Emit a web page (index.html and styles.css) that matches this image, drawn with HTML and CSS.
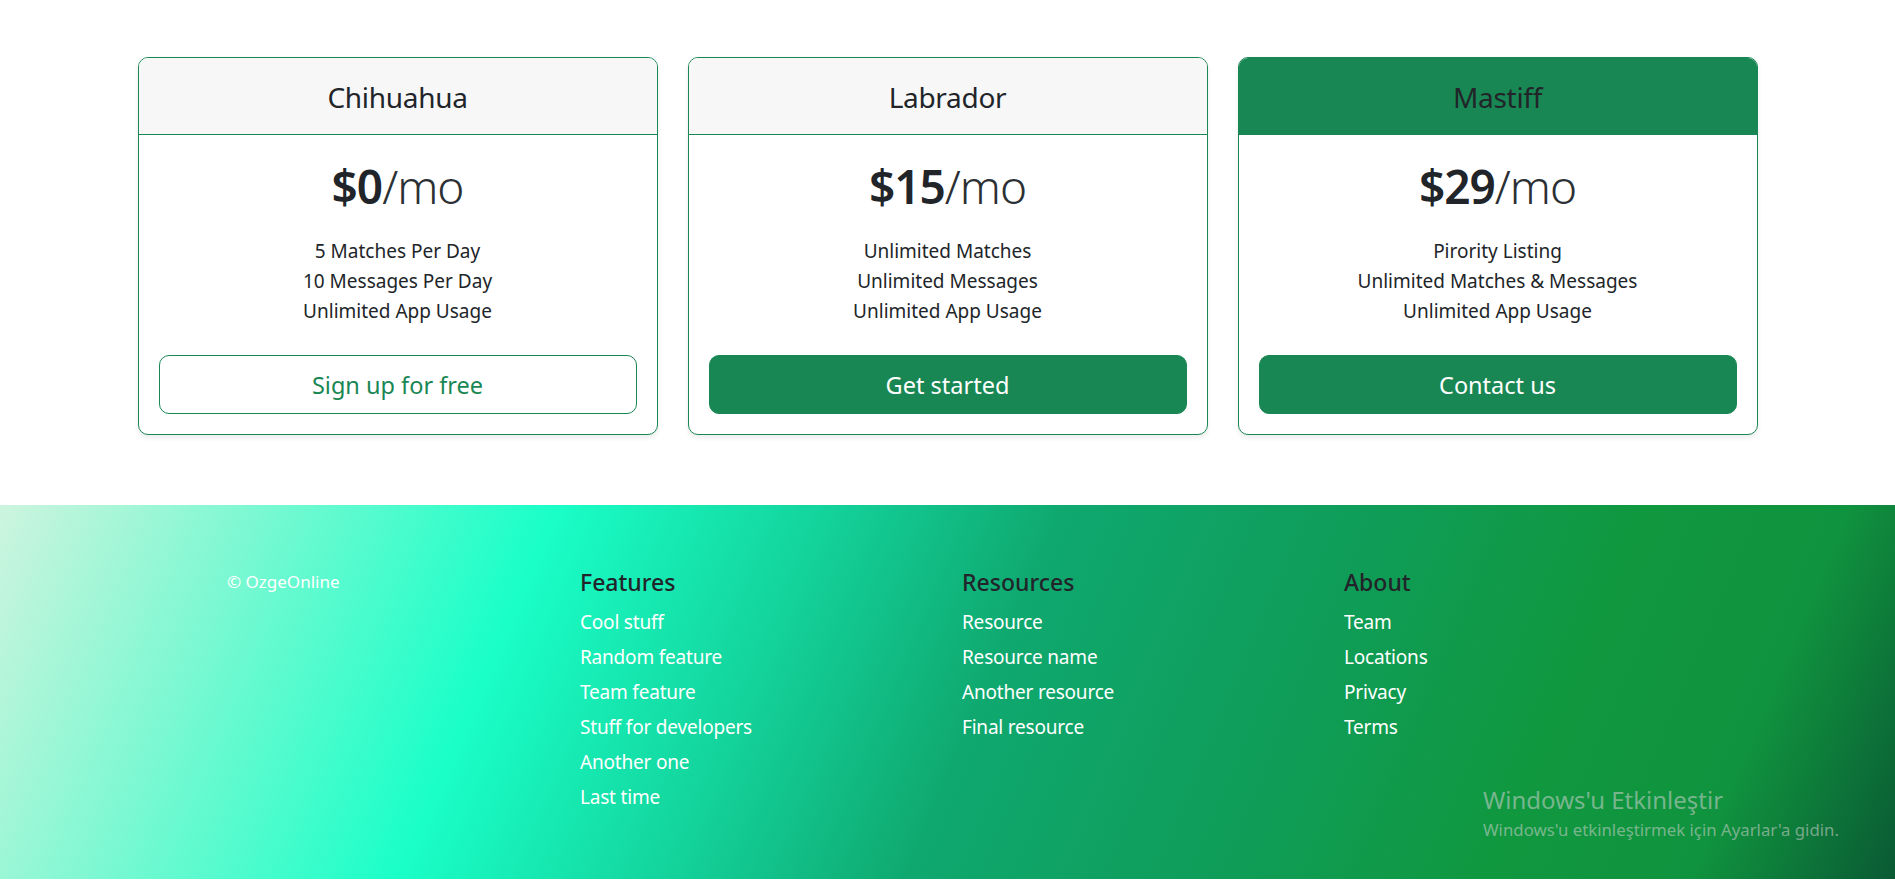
FILE: index.html
```html
<!DOCTYPE html>
<html lang="en">
<head>
<meta charset="utf-8">
<title>Pricing</title>
<link rel="stylesheet" href="styles.css">
</head>
<body>
<section class="pricing">
  <div class="pricing-row">
    <div class="card">
      <div class="card-header"><h4>Chihuahua</h4></div>
      <div class="card-body">
        <h1 class="price">$0<small>/mo</small></h1>
        <ul class="plan-list">
          <li>5 Matches Per Day</li>
          <li>10 Messages Per Day</li>
          <li>Unlimited App Usage</li>
        </ul>
        <button class="btn btn-outline">Sign up for free</button>
      </div>
    </div>
    <div class="card">
      <div class="card-header"><h4>Labrador</h4></div>
      <div class="card-body">
        <h1 class="price">$15<small>/mo</small></h1>
        <ul class="plan-list">
          <li>Unlimited Matches</li>
          <li>Unlimited Messages</li>
          <li>Unlimited App Usage</li>
        </ul>
        <button class="btn btn-solid">Get started</button>
      </div>
    </div>
    <div class="card">
      <div class="card-header featured"><h4>Mastiff</h4></div>
      <div class="card-body">
        <h1 class="price">$29<small>/mo</small></h1>
        <ul class="plan-list">
          <li>Pirority Listing</li>
          <li>Unlimited Matches &amp; Messages</li>
          <li>Unlimited App Usage</li>
        </ul>
        <button class="btn btn-solid">Contact us</button>
      </div>
    </div>
  </div>
</section>

<footer class="site-footer">
  <div class="footer-grid">
    <div class="footer-brand"><small>© OzgeOnline</small></div>
    <div class="footer-col">
      <h5>Features</h5>
      <ul>
        <li><a href="#">Cool stuff</a></li>
        <li><a href="#">Random feature</a></li>
        <li><a href="#">Team feature</a></li>
        <li><a href="#">Stuff for developers</a></li>
        <li><a href="#">Another one</a></li>
        <li><a href="#">Last time</a></li>
      </ul>
    </div>
    <div class="footer-col">
      <h5>Resources</h5>
      <ul>
        <li><a href="#">Resource</a></li>
        <li><a href="#">Resource name</a></li>
        <li><a href="#">Another resource</a></li>
        <li><a href="#">Final resource</a></li>
      </ul>
    </div>
    <div class="footer-col">
      <h5>About</h5>
      <ul>
        <li><a href="#">Team</a></li>
        <li><a href="#">Locations</a></li>
        <li><a href="#">Privacy</a></li>
        <li><a href="#">Terms</a></li>
      </ul>
    </div>
  </div>
  <div class="activation">
    <div class="activation-title">Windows'u Etkinleştir</div>
    <div class="activation-sub">Windows'u etkinleştirmek için Ayarlar'a gidin.</div>
  </div>
</footer>
</body>
</html>
```

FILE: styles.css
```css
* { box-sizing: border-box; }

html, body {
  margin: 0;
  padding: 0;
}

body {
  font-family: "Noto Sans", "Open Sans", sans-serif;
  font-size: 19px;
  line-height: 30px;
  color: #212529;
  background: #fff;
  overflow: hidden;
}

.pricing {
  padding-top: 57px;
  padding-bottom: 40px;
}

.pricing-row {
  width: 1620px;
  margin: 0 auto;
  display: grid;
  grid-template-columns: repeat(3, 1fr);
  column-gap: 30px;
}

.card {
  border: 1px solid #198754;
  border-radius: 10px;
  box-shadow: 0 2.5px 5px rgba(0, 0, 0, 0.075);
  overflow: hidden;
  text-align: center;
  margin-bottom: 30px;
  background: #fff;
}

.card-header {
  background: #f7f7f7;
  padding: 21px 20px 19px;
  border-bottom: 1px solid #198754;
}

.card-header.featured {
  background: #198754;
}

.card-header h4 {
  margin: 0;
  font-size: 28px;
  line-height: 36px;
  font-weight: 400;
  letter-spacing: -0.3px;
}

.card-body {
  padding: 20px;
}

.price {
  margin: 0 0 10px;
  padding-top: 3px;
  font-size: 46px;
  line-height: 57px;
  font-weight: 600;
  letter-spacing: -1px;
  color: #212529;
}

.price small {
  font-size: 46px;
  font-weight: 300;
  color: #2c3034;
}

.plan-list {
  list-style: none;
  padding: 1px 0 0;
  margin: 20px 0 29px;
}

.btn {
  display: block;
  width: 100%;
  font-family: inherit;
  font-size: 23.5px;
  line-height: 37px;
  padding: 11px 20px 9px;
  border: 1px solid #198754;
  border-radius: 10px;
  cursor: pointer;
}

.btn-outline {
  background: #fff;
  color: #198754;
}

.btn-solid {
  background: #198754;
  color: #fff;
}

.site-footer {
  position: relative;
  height: 374px;
  padding: 62px 0 0;
  background: linear-gradient(113deg,
    #cdf4de 0%,
    #7ff8d2 12%,
    #1affc8 27%,
    #13d49c 40%,
    #0fa86f 52%,
    #0f9d5a 66%,
    #10983f 80%,
    #10933e 90%,
    #0a5a34 100%);
}

.footer-grid {
  display: grid;
  grid-template-columns: 353px 382px 382px 1fr;
  padding-left: 227px;
}

.footer-brand small {
  display: block;
  margin-top: 2px;
  font-size: 17px;
  line-height: 26px;
  color: #fff;
}

.footer-col h5 {
  margin: 0 0 10px;
  font-size: 23px;
  line-height: 30px;
  font-weight: 500;
  color: #212529;
}

.footer-col ul {
  list-style: none;
  margin: 0;
  padding: 0;
}

.footer-col li {
  margin-bottom: 5px;
  letter-spacing: -0.2px;
}

.footer-col a {
  color: #fff;
  text-decoration: none;
}

.activation {
  position: absolute;
  left: 1483px;
  top: 279px;
  color: rgba(210, 210, 210, 0.55);
  white-space: nowrap;
}

.activation-title {
  font-size: 24px;
  line-height: 32px;
}

.activation-sub {
  font-size: 16.8px;
  line-height: 22px;
  margin-top: 3px;
}
```
